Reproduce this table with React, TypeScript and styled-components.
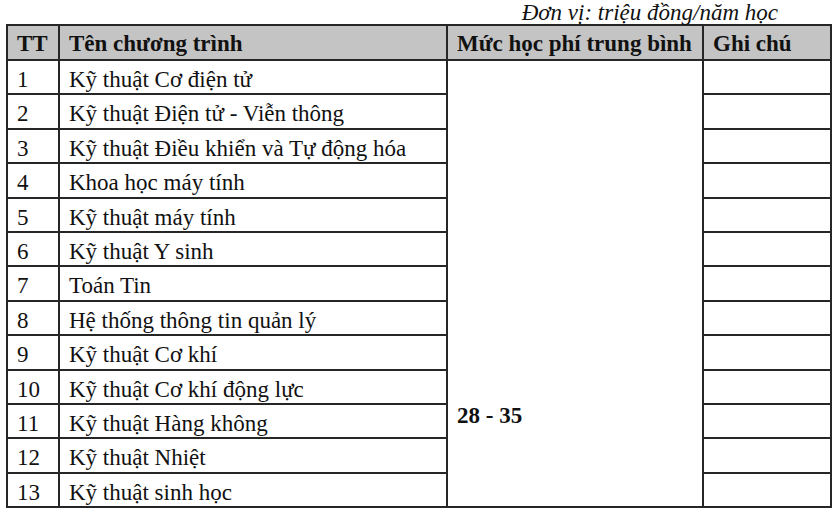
import styled, { createGlobalStyle } from "styled-components";

const programs = [
  "Kỹ thuật Cơ điện tử",
  "Kỹ thuật Điện tử - Viễn thông",
  "Kỹ thuật Điều khiển và Tự động hóa",
  "Khoa học máy tính",
  "Kỹ thuật máy tính",
  "Kỹ thuật Y sinh",
  "Toán Tin",
  "Hệ thống thông tin quản lý",
  "Kỹ thuật Cơ khí",
  "Kỹ thuật Cơ khí động lực",
  "Kỹ thuật Hàng không",
  "Kỹ thuật Nhiệt",
  "Kỹ thuật sinh học",
];

const GlobalStyle = createGlobalStyle`
  html, body {
    margin: 0;
    padding: 0;
    background: #ffffff;
  }

  body {
    font-family: "Liberation Serif", "Times New Roman", serif;
    color: #111111;
  }
`;

const Page = styled.div`
  width: 840px;
  height: 514px;
  overflow: hidden;
  background: #ffffff;
`;

const UnitNote = styled.div`
  height: 24px;
  padding-right: 62px;
  text-align: right;
  font-size: 23px;
  font-style: italic;
  line-height: 25px;
`;

const FeeTable = styled.table`
  margin-left: 6px;
  width: 824px;
  table-layout: fixed;
  border-collapse: collapse;
  font-size: 23px;
  line-height: 26px;
`;

const HeadRow = styled.tr`
  height: 35px;
`;

const BodyRow = styled.tr`
  height: 34.4px;
`;

const HeadCell = styled.th`
  padding: 5px 9px 0;
  border: 2px solid #262626;
  background: #c4c4c4;
  font-weight: 700;
  text-align: left;
  vertical-align: top;
  white-space: nowrap;
`;

const Cell = styled.td`
  padding: 6px 9px 0;
  border: 2px solid #262626;
  text-align: left;
  vertical-align: top;
  white-space: nowrap;
`;

const FeeCell = styled(Cell)`
  padding: 0 9px 77px;
  font-weight: 700;
  vertical-align: bottom;
`;

export default function App() {
  return (
    <Page>
      <GlobalStyle />
      <UnitNote>Đơn vị: triệu đồng/năm học</UnitNote>
      <FeeTable>
        <colgroup>
          <col style={{ width: 52 }} />
          <col style={{ width: 388 }} />
          <col style={{ width: 256 }} />
          <col style={{ width: 128 }} />
        </colgroup>
        <thead>
          <HeadRow>
            <HeadCell>TT</HeadCell>
            <HeadCell>Tên chương trình</HeadCell>
            <HeadCell>Mức học phí trung bình</HeadCell>
            <HeadCell>Ghi chú</HeadCell>
          </HeadRow>
        </thead>
        <tbody>
          {programs.map((name, index) => (
            <BodyRow key={name}>
              <Cell>{index + 1}</Cell>
              <Cell>{name}</Cell>
              {index === 0 ? <FeeCell rowSpan={programs.length}>28 - 35</FeeCell> : null}
              <Cell />
            </BodyRow>
          ))}
        </tbody>
      </FeeTable>
    </Page>
  );
}
